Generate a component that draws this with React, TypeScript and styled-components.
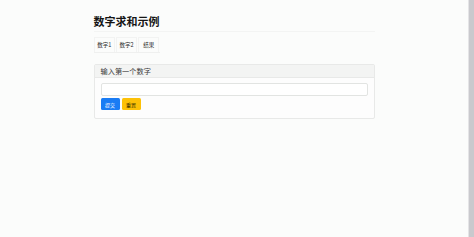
import styled, { createGlobalStyle } from 'styled-components';

const GlobalStyle = createGlobalStyle`
  html, body {
    margin: 0;
    padding: 0;
    height: 100%;
    background: #fbfcfb;
    font-family: "Noto Sans CJK SC", "Liberation Sans", sans-serif;
    color: #212529;
  }
  #root {
    height: 100%;
  }
`;

const Page = styled.div`
  display: flex;
  height: 237px;
  overflow: hidden;
`;

const Main = styled.main`
  flex: 1;
  display: flex;
  justify-content: center;
  padding-top: 14px;
`;

const Scrollbar = styled.div`
  width: 5px;
  background: #c9c9cd;
  border-left: 1px solid #e4e4e6;
`;

const Container = styled.div`
  width: 281px;
`;

const Title = styled.h1`
  margin: 0;
  font-size: 11px;
  font-weight: 700;
  line-height: 15px;
  color: #151515;
  padding-bottom: 2px;
  border-bottom: 1px solid #f3f4f3;
`;

const Tabs = styled.div`
  display: flex;
  margin-top: 5px;
  gap: 1px;
  width: 66px;
  border-bottom: 1px solid #eff0ef;
`;

const Tab = styled.div<{ $w: number }>`
  width: ${(p) => p.$w}px;
  height: 14px;
  display: flex;
  align-items: center;
  justify-content: center;
  font-size: 5.5px;
  color: #2a2a2a;
  border: 1px solid #f2f3f2;
  border-bottom: none;
`;

const Card = styled.section`
  margin-top: 11px;
  border: 1px solid #e8e9e8;
  border-radius: 2px;
  background: #fdfdfd;
`;

const CardHeader = styled.div`
  height: 12px;
  padding: 0 6px;
  display: flex;
  align-items: center;
  font-size: 7.2px;
  color: #3a3a3a;
  background: #f3f4f3;
  border-bottom: 1px solid #e8e9e8;
`;

const CardBody = styled.div`
  padding: 5px 6px 8px 6px;
  display: flex;
  flex-direction: column;
  gap: 2px;
`;

const Input = styled.input`
  box-sizing: border-box;
  width: 267px;
  height: 13px;
  border: 1px solid #e2e4e2;
  border-radius: 2px;
  background: #fff;
  outline: none;
  padding: 0;
`;

const Buttons = styled.div`
  display: flex;
  gap: 2px;
`;

const Button = styled.button<{ $kind: 'primary' | 'warning' }>`
  width: 19px;
  height: 12px;
  border: none;
  border-radius: 1.5px;
  padding: 0;
  font-family: inherit;
  font-size: 5px;
  background: ${(p) => (p.$kind === 'primary' ? '#1a7cf4' : '#fdc107')};
  color: ${(p) => (p.$kind === 'primary' ? '#fff' : '#3a3000')};
`;

export default function App() {
  return (
    <>
      <GlobalStyle />
      <Page>
        <Main>
          <Container>
            <Title>数字求和示例</Title>
            <Tabs>
              <Tab $w={21}>数字1</Tab>
              <Tab $w={21}>数字2</Tab>
              <Tab $w={21}>结果</Tab>
            </Tabs>
            <Card>
              <CardHeader>输入第一个数字</CardHeader>
              <CardBody>
                <Input type="text" />
                <Buttons>
                  <Button $kind="primary">提交</Button>
                  <Button $kind="warning">重置</Button>
                </Buttons>
              </CardBody>
            </Card>
          </Container>
        </Main>
        <Scrollbar />
      </Page>
    </>
  );
}
